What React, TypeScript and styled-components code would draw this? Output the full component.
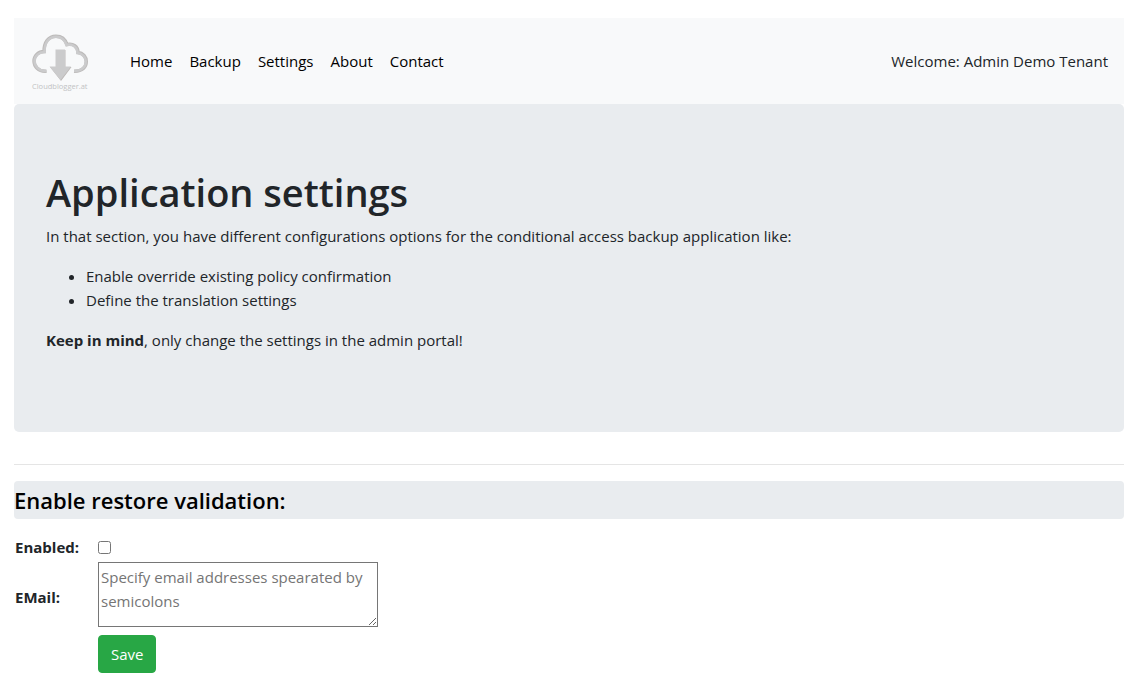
import React from "react";
import styled, { createGlobalStyle } from "styled-components";

const GlobalStyle = createGlobalStyle`
  *, *::before, *::after { box-sizing: border-box; }
  body {
    margin: 0;
    background: #fff;
    color: #212529;
    font-family: "Segoe UI", "Open Sans", "Noto Sans", sans-serif;
    font-size: 15px;
    line-height: 24px;
  }
`;

const Page = styled.div`
  padding: 18px 16px 0 14px;
`;

const NavBar = styled.header`
  display: flex;
  align-items: center;
  padding: 8px 16px;
  background: #f8f9fa;
`;

const Brand = styled.a`
  display: block;
  height: 70px;
  margin-right: 40px;
`;

const NavLinks = styled.nav`
  display: flex;
  flex: 1;
  gap: 17px;
`;

const NavLink = styled.a`
  color: #000;
  text-decoration: none;
`;

const Jumbotron = styled.section`
  padding: 64px 32px;
  margin-bottom: 32px;
  background: #e9ecef;
  border-radius: 5px;
`;

const Title = styled.h1`
  margin: 0 0 8px;
  font-size: 38px;
  font-weight: 600;
  line-height: 48px;
`;

const Paragraph = styled.p`
  margin: 0 0 16px;
`;

const OptionList = styled.ul`
  margin: 0 0 16px;
  padding-left: 40px;
`;

const Divider = styled.hr`
  margin: 0 0 16px;
  border: 0;
  border-top: 1px solid #e5e5e5;
`;

const SectionTitle = styled.h2`
  margin: 0 0 16px;
  padding: 4px 0;
  background: #e9ecef;
  border-radius: 4px;
  color: #000;
  font-size: 22px;
  font-weight: 600;
  line-height: 30px;
`;

const SettingsForm = styled.form`
  display: grid;
  grid-template-columns: 83px minmax(0, 280px);
  align-items: center;
  padding: 0 1px;
`;

const Label = styled.label`
  font-weight: 700;
`;

const Checkbox = styled.input`
  width: 13px;
  height: 13px;
  margin: 0;
`;

const EmailBox = styled.textarea`
  display: block;
  width: 100%;
  height: 65px;
  margin: 3px 0 8px;
  padding: 2px;
  border: 1px solid #767676;
  font: inherit;
  resize: both;

  &::placeholder { color: #757575; }
`;

const SaveButton = styled.button`
  grid-column: 2;
  justify-self: start;
  padding: 6px 12px;
  border: 1px solid #28a745;
  border-radius: 4px;
  background: #28a745;
  color: #fff;
  font: inherit;
  cursor: pointer;
`;

const Logo = () => (
  <svg width="60" height="70" viewBox="0 0 60 70" role="img" aria-label="Cloudblogger.at">
    <path
      d="M16.500 45.200C8 46 4 40 4 35C4 29.500 8.500 25.500 14 25.500C14 16 18.500 10.200 26 10.200C32 10.200 35.500 14 37 18.500C43 17 48 20.500 48 26.500C53 27 56.300 31 56.300 35.500C56.300 41 52.500 45.500 44 45.200"
      fill="none"
      stroke="#bdbbba"
      strokeWidth="3.400"
    />
    <path
      d="M16.500 45C8.500 45.500 4.500 39.500 4.500 35C4.500 30 9 26 14.500 26C14.500 16.500 19 10.700 26 10.700C31.500 10.700 35 14.500 36.500 19C42.500 17.500 47.500 21 47.500 27C52.500 27.500 55.800 31.500 55.800 35.500C55.800 40.500 52 45 44 45"
      fill="none"
      stroke="#cbcbcc"
      strokeWidth="2.600"
    />
    <path d="M26 24H35.500V41H41.500L31 55L20 41H26Z" fill="#bdb9b7" />
    <path d="M25.500 23.500H35V40.500H41L30.500 54L19.500 40.500H25.500Z" fill="#cbcbcc" />
    <text x="2" y="63" fontFamily="Open Sans, sans-serif" fontSize="7.500" fill="#c2c3c4">
      Cloudblogger.at
    </text>
  </svg>
);

const links = ["Home", "Backup", "Settings", "About", "Contact"];

export default function App() {
  return (
    <>
      <GlobalStyle />
      <Page>
        <NavBar>
          <Brand href="#"><Logo /></Brand>
          <NavLinks>
            {links.map((name) => (
              <NavLink key={name} href={"#" + name.toLowerCase()}>{name}</NavLink>
            ))}
          </NavLinks>
          <span>Welcome: Admin Demo Tenant</span>
        </NavBar>
        <main>
          <Jumbotron>
            <Title>Application settings</Title>
            <Paragraph>
              In that section, you have different configurations options for the conditional access backup application like:
            </Paragraph>
            <OptionList>
              <li>Enable override existing policy confirmation</li>
              <li>Define the translation settings</li>
            </OptionList>
            <Paragraph>
              <b>Keep in mind</b>, only change the settings in the admin portal!
            </Paragraph>
          </Jumbotron>
          <Divider />
          <SectionTitle>Enable restore validation:</SectionTitle>
          <SettingsForm onSubmit={(e) => e.preventDefault()}>
            <Label htmlFor="enabled">Enabled:</Label>
            <Checkbox id="enabled" type="checkbox" />
            <Label htmlFor="email">EMail:</Label>
            <EmailBox id="email" placeholder="Specify email addresses spearated by semicolons" />
            <SaveButton type="submit">Save</SaveButton>
          </SettingsForm>
        </main>
      </Page>
    </>
  );
}
